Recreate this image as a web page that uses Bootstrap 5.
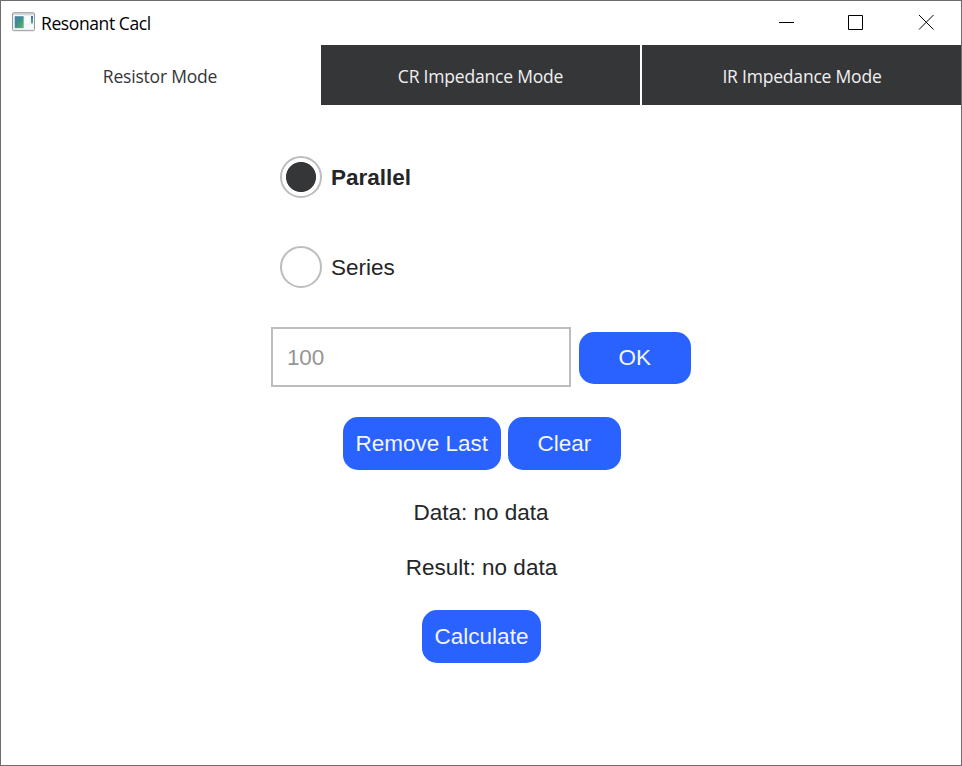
<!DOCTYPE html>
<html lang="en">
<head>
<meta charset="utf-8">
<title>Resonant Cacl</title>
<link href="https://cdn.jsdelivr.net/npm/bootstrap@5.3.0/dist/css/bootstrap.min.css" rel="stylesheet">
<style>
  body { font-family: "Liberation Sans", Arial, sans-serif; font-size: 22.5px; line-height: 26px; color: #242628; }
  .app-window { border: 1px solid #6d6c6e; overflow: hidden; }
  .title-bar { height: 44px; padding-left: 11px; font-family: "Open Sans", "Segoe UI", sans-serif; color: #000; }
  .app-icon { margin-top: -2px; }
  .app-title { font-size: 17.5px; margin-left: 6px; letter-spacing: -.4px; }
  .win-btn { width: 70px; height: 44px; padding: 0 0 2px; border: 0; background: none; }
  .mode-tabs { height: 60px; gap: 2px; padding-left: 0; font-family: "Open Sans", "Segoe UI", sans-serif; }
  .mode-tabs .nav-link { padding: 2px 0 0; font-size: 17.5px; letter-spacing: -.2px; color: #f0f0f0; background: #353638; border-radius: 0; flex: 0 0 319px; }
  .mode-tabs .nav-link.active { color: #353638; background: #fff; flex-basis: 318px; }
  .mode-tabs .nav-link:last-child { flex-basis: 320px; }
  .mode-form { padding-top: 51px; }
  .mode-options { width: 400px; gap: 48px; padding-left: 0; margin-left: -2px; }
  .mode-option { gap: 9px; height: 42px; }
  .mode-option span { padding-top: 2px; }
  .mode-option .form-check-input { width: 42px; height: 42px; margin: 0; border: 2px solid #bdbdbd; box-shadow: none; background-color: #fff; }
  .mode-option .form-check-input:checked { background-image: radial-gradient(circle, #353638 14.6px, transparent 15.4px); background-size: 100% 100%; background-origin: border-box; }
  .value-input.form-control { width: 300px; height: 60px; padding: 2px 14px 0; border: 2px solid #bdbdbd; border-radius: 0; font-size: 22.5px; letter-spacing: -.2px; }
  .value-input::placeholder { color: #959595; opacity: 1; }
  .btn-calc { --bs-btn-bg: #2962ff; --bs-btn-color: #f3f5ff; --bs-btn-hover-bg: #1f55e8; --bs-btn-hover-color: #fff;
    height: 52.5px; min-width: 112.5px; padding: 1px 12.5px 0; border: 0; border-radius: 15px; font-size: 22.5px; line-height: 26px; }
  .btn-group-row { gap: 7.5px; }
  .value-row { margin-top: 39px; }
  .value-row .btn-calc { margin-top: 1.500px; }
  .action-row { margin: 30px 0 0 1.500px; }
  .data-line { margin-top: 30px; }
  .result-line { margin: 29px 0 0 1px; }
  .calc-row { margin: 29.500px 0 0 1px; }
</style>
</head>
<body>
<div class="app-window vh-100 bg-white d-flex flex-column">
  <header class="title-bar d-flex align-items-center">
    <svg class="app-icon" width="23" height="20" viewBox="0 0 23 20">
      <defs>
        <linearGradient id="pane" x1="0" y1="0" x2="1" y2="1"><stop offset="0" stop-color="#3c7fae"/><stop offset=".5" stop-color="#41928b"/><stop offset="1" stop-color="#65b768"/></linearGradient>
        <linearGradient id="strip" x1="0" y1="0" x2="0" y2="1"><stop offset="0" stop-color="#3c6eae"/><stop offset="1" stop-color="#58aa85"/></linearGradient>
      </defs>
      <rect x=".5" y=".7" width="22" height="18" rx="1.2" fill="#eceef0" stroke="#969a9f"/>
      <rect x="1" y="1.2" width="21" height="1.500" fill="#c9cdd3"/>
      <rect x="2" y="3.500" width="10.5" height="13.500" fill="#fff"/>
      <rect x="2.700" y="4.200" width="9" height="12" fill="url(#pane)"/>
      <rect x="13.5" y="4" width="4" height="7.5" fill="#fff"/>
      <rect x="18.5" y="4" width="3" height="8" fill="#fff"/>
      <rect x="19" y="4" width="2" height="7.5" fill="url(#strip)"/>
      <rect x="13.5" y="12.5" width="8" height="4.5" fill="#f8f8f8"/>
    </svg>
    <span class="app-title">Resonant Cacl</span>
    <div class="d-flex ms-auto">
      <button class="win-btn" aria-label="Minimize"><svg class="d-block mx-auto" width="16" height="16"><path d="M1 8.5h15" stroke="#000"/></svg></button>
      <button class="win-btn" aria-label="Maximize"><svg class="d-block mx-auto" width="16" height="16"><path d="M.5 1.5h14v14H.5z" fill="none" stroke="#000"/></svg></button>
      <button class="win-btn" aria-label="Close"><svg class="d-block mx-auto" width="16" height="16"><path d="M1 1l14.500 14.500M15.500 1L1 15.500" fill="none" stroke="#000"/></svg></button>
    </div>
  </header>
  <nav class="mode-tabs nav flex-nowrap">
    <a class="nav-link active d-flex align-items-center justify-content-center" href="#">Resistor Mode</a>
    <a class="nav-link d-flex align-items-center justify-content-center" href="#">CR Impedance Mode</a>
    <a class="nav-link d-flex align-items-center justify-content-center" href="#">IR Impedance Mode</a>
  </nav>
  <main class="mode-form d-flex flex-column align-items-center">
    <div class="mode-options d-flex flex-column">
      <label class="mode-option d-flex align-items-center fw-bold"><input class="form-check-input rounded-circle" type="radio" name="mode" checked><span>Parallel</span></label>
      <label class="mode-option d-flex align-items-center"><input class="form-check-input rounded-circle" type="radio" name="mode"><span>Series</span></label>
    </div>
    <div class="value-row btn-group-row d-flex align-items-center">
      <input class="form-control value-input" type="text" placeholder="100" aria-label="Value">
      <button class="btn btn-calc">OK</button>
    </div>
    <div class="action-row btn-group-row d-flex">
      <button class="btn btn-calc">Remove Last</button>
      <button class="btn btn-calc">Clear</button>
    </div>
    <div class="data-line">Data: no data</div>
    <div class="result-line">Result: no data</div>
    <button class="btn btn-calc calc-row">Calculate</button>
  </main>
</div>
<script src="https://cdn.jsdelivr.net/npm/bootstrap@5.3.0/dist/js/bootstrap.bundle.min.js"></script>
</body>
</html>
